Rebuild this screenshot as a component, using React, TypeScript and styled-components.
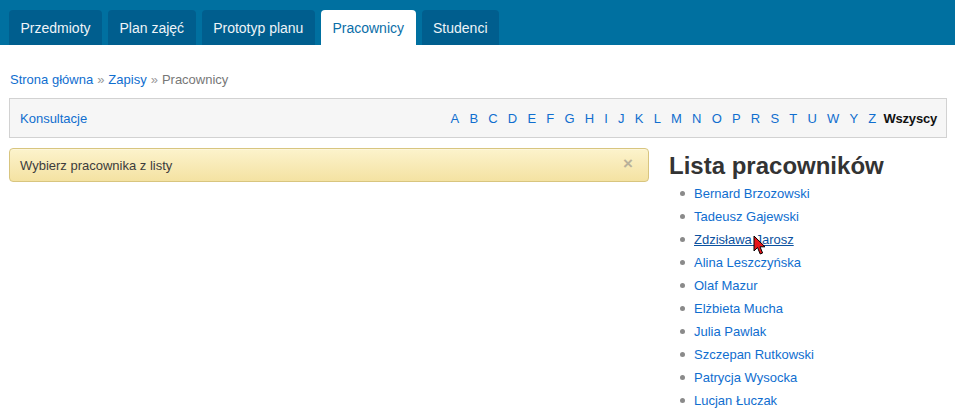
import React from "react";
import styled, { createGlobalStyle } from "styled-components";

const Global = createGlobalStyle`
  html, body { margin: 0; padding: 0; background: #fff; }
  body { font-family: "Liberation Sans", Arial, sans-serif; font-size: 13px; color: #333; }
  * { box-sizing: border-box; }
`;

const TopBar = styled.nav`
  height: 45px;
  background: #0070a0;
  display: flex;
  align-items: flex-end;
  gap: 6px;
  padding: 0 9px;
`;

const Tab = styled.a<{ $active?: boolean }>`
  height: 35px;
  display: flex;
  align-items: center;
  padding: 0 11.5px;
  border-radius: 4px 4px 0 0;
  font-size: 14px;
  text-decoration: none;
  cursor: pointer;
  background: ${(p) => (p.$active ? "#fff" : "#005e8e")};
  color: ${(p) => (p.$active ? "#0a6ea8" : "#eef4f8")};
`;

const Page = styled.div`
  padding: 0 8px 0 9px;
`;

const Breadcrumb = styled.div`
  margin-top: 26px;
  margin-left: 1px;
  line-height: 18px;
  font-size: 13px;
  color: #777;
`;

const Crumb = styled.a`
  color: #106ecf;
  text-decoration: none;
`;

const Sep = styled.span`
  color: #999;
  padding: 0 4px;
`;

const FilterBar = styled.div`
  margin-top: 9px;
  height: 40px;
  background: #f6f6f6;
  border: 1px solid #d2d2d2;
  display: flex;
  align-items: center;
  justify-content: space-between;
  padding: 0 9px 0 10px;
`;

const Letters = styled.div`
  display: flex;
  align-items: center;
  gap: 10.2px;
`;

const Link = styled.a`
  color: #106ecf;
  text-decoration: none;
  cursor: pointer;
`;

const AllLink = styled.span`
  color: #111;
  font-weight: bold;
  margin-left: -3px;
  letter-spacing: -0.2px;
`;

const Columns = styled.div`
  margin-top: 10px;
  display: grid;
  grid-template-columns: 640px 1fr;
  column-gap: 20px;
  align-items: start;
`;

const Alert = styled.div`
  height: 34px;
  border: 1px solid #d8c57f;
  border-radius: 4px;
  background: linear-gradient(#fcf3cc, #f4e2a2);
  display: flex;
  align-items: center;
  justify-content: space-between;
  padding: 0 14px 0 14px;
  color: #3c3c3c;
  font-size: 13px;
  box-shadow: inset 0 1px 0 rgba(255, 255, 255, 0.3);
`;

const AlertText = styled.span`
  margin-left: -4px;
`;

const Close = styled.span`
  color: #b9b19a;
  font-weight: bold;
  font-size: 17px;
  line-height: 1;
  margin-top: -4px;
  margin-right: 1px;
`;

const Side = styled.div`
  position: relative;
`;

const Heading = styled.h2`
  margin: 4px 0 0 0;
  font-size: 24px;
  line-height: 28px;
  font-weight: bold;
  color: #333;
`;

const List = styled.ul`
  margin: 2px 0 0 0;
  padding-left: 25px;
  list-style: none;
`;

const Item = styled.li`
  position: relative;
  line-height: 23px;
  font-size: 13px;
  &::before {
    content: "";
    position: absolute;
    left: -14px;
    top: 9px;
    width: 5px;
    height: 5px;
    border-radius: 50%;
    background: #8a8a8a;
  }
`;

const PersonLink = styled.a<{ $hover?: boolean }>`
  position: relative;
  color: ${(p) => (p.$hover ? "#0b52a0" : "#106ecf")};
  text-decoration: ${(p) => (p.$hover ? "underline" : "none")};
  cursor: pointer;
`;

const Cursor = styled.svg`
  position: absolute;
  left: 59px;
  top: 3px;
  pointer-events: none;
`;

const tabs = ["Przedmioty", "Plan zajęć", "Prototyp planu", "Pracownicy", "Studenci"];
const letters = "A B C D E F G H I J K L M N O P R S T U W Y Z".split(" ");
const people = [
  "Bernard Brzozowski",
  "Tadeusz Gajewski",
  "Zdzisława Jarosz",
  "Alina Leszczyńska",
  "Olaf Mazur",
  "Elżbieta Mucha",
  "Julia Pawlak",
  "Szczepan Rutkowski",
  "Patrycja Wysocka",
  "Lucjan Łuczak",
];

export default function App() {
  return (
    <>
      <Global />
      <TopBar>
        {tabs.map((t) => (
          <Tab key={t} $active={t === "Pracownicy"}>
            {t}
          </Tab>
        ))}
      </TopBar>
      <Page>
        <Breadcrumb>
          <Crumb>Strona główna</Crumb>
          <Sep>»</Sep>
          <Crumb>Zapisy</Crumb>
          <Sep>»</Sep>
          Pracownicy
        </Breadcrumb>
        <FilterBar>
          <Link>Konsultacje</Link>
          <Letters>
            {letters.map((l) => (
              <Link key={l}>{l}</Link>
            ))}
            <AllLink>Wszyscy</AllLink>
          </Letters>
        </FilterBar>
        <Columns>
          <Alert>
            <AlertText>Wybierz pracownika z listy</AlertText>
            <Close>×</Close>
          </Alert>
          <Side>
            <Heading>Lista pracowników</Heading>
            <List>
              {people.map((p, i) => (
                <Item key={p}>
                  <PersonLink $hover={i === 2}>
                    {p}
                    {i === 2 && (
                      <Cursor width="14" height="21" viewBox="0 0 14 21">
                        <path
                          d="M1 1 L1 16 L4.5 12.5 L7.2 19 L9.6 18 L7 11.8 L12 11.8 Z"
                          fill="#e8141a"
                          stroke="#000"
                          strokeWidth="1"
                          strokeLinejoin="miter"
                        />
                      </Cursor>
                    )}
                  </PersonLink>
                </Item>
              ))}
            </List>
          </Side>
        </Columns>
      </Page>
    </>
  );
}
